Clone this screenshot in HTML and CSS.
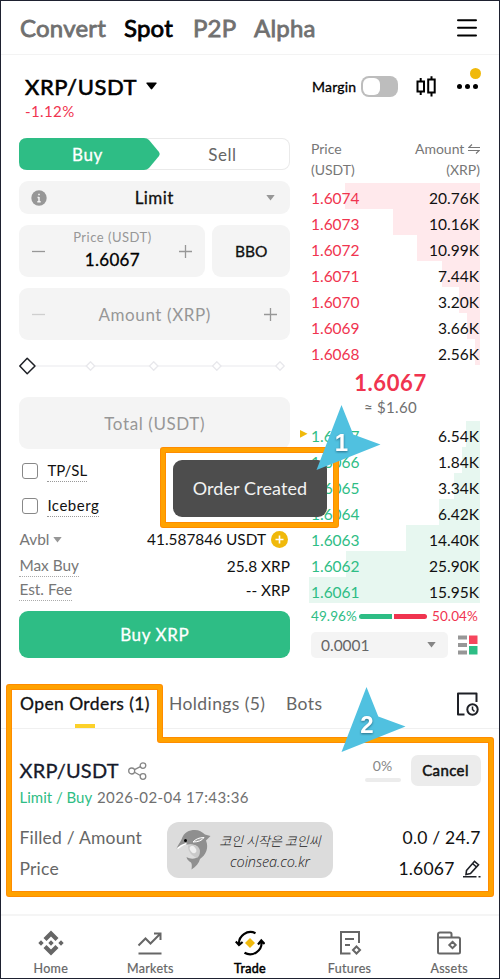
FILE: index.html
```html
<!DOCTYPE html>
<html lang="en">
<head>
    <meta charset="UTF-8">
    <meta name="viewport" content="width=device-width, initial-scale=1.0">
    <title>XRP/USDT Spot</title>
    <link rel="stylesheet" href="styles.css">
</head>
<body>
    <div class="app">
        <header class="top-nav">
            <span class="nav-link nav-convert">Convert</span>
            <span class="nav-link nav-spot active">Spot</span>
            <span class="nav-link nav-p2p">P2P</span>
            <span class="nav-link nav-alpha">Alpha</span>
            <svg class="menu-icon" width="20" height="18" viewBox="0 0 20 18" stroke="#000" stroke-width="2" stroke-linecap="round"><path d="M1 1.200h18M1 8.800h18M1 16.400h18"/></svg>
        </header>

        <div class="pair-bar">
            <div class="pair">
                <div class="pair-name"><span>XRP/USDT</span><svg width="11" height="8" viewBox="0 0 11 8"><path d="M1 .5h9q1 0 .5 1L6.200 7q-.7.8-1.400 0L.5 1.500Q0 .5 1 .5z"/></svg></div>
                <div class="pair-change">-1.12%</div>
            </div>
            <div class="pair-tools">
                <span class="margin-label">Margin</span>
                <span class="toggle"></span>
                <svg class="candle-icon" width="21" height="21" viewBox="0 0 21 21" fill="none" stroke="#000" stroke-width="2"><path d="M1.500 5.500h6.500v10H1.500zM4.700 2v3.500M4.700 15.500V19M12.200 3.500h6.500v13h-6.500zM15.500.2v3.300M15.500 16.500v4"/></svg>
                <span class="more"><i></i><i></i><i></i><b class="dot"></b></span>
            </div>
        </div>

        <main class="trade">
            <section class="form">
                <div class="side">
                    <svg class="side-bg" width="142" height="32" viewBox="0 0 142 32"><path fill="#2ebd85" d="M8 0h117q3 0 5 2l10 12q1.500 2 0 4l-10 12q-2 2-5 2H8q-8 0-8-8V8Q0 0 8 0z"/></svg>
                    <span class="side-buy">Buy</span>
                    <span class="side-sell">Sell</span>
                </div>

                <div class="field type">
                    <svg width="16" height="16" viewBox="0 0 16 16"><circle cx="8" cy="8" r="7.700" fill="#979797"/><path stroke="#f4f4f4" stroke-width="1.500" d="M8 7v5M6.500 7.500H8M6.300 11.800h3.400M7.200 4.500h1.600"/></svg>
                    <span class="type-text">Limit</span>
                    <svg width="9" height="6" viewBox="0 0 9 6"><path fill="#979797" d="M.3 0h8.400L4.500 5.600z"/></svg>
                </div>

                <div class="price-row">
                    <div class="field price">
                        <svg width="13" height="13" viewBox="0 0 13 13" stroke="#979797" stroke-width="1.300"><path d="M0 6.500h13"/></svg>
                        <div class="price-text"><small>Price (USDT)</small><strong>1.6067</strong></div>
                        <svg width="13" height="13" viewBox="0 0 13 13" stroke="#979797" stroke-width="1.300"><path d="M0 6.500h13M6.500 0v13"/></svg>
                    </div>
                    <div class="field bbo">BBO</div>
                </div>

                <div class="field amount">
                    <svg width="13" height="13" viewBox="0 0 13 13" stroke="#cfcfcf" stroke-width="1.300"><path d="M0 6.500h13"/></svg>
                    <span class="amount-text">Amount (XRP)</span>
                    <svg width="13" height="13" viewBox="0 0 13 13" stroke="#979797" stroke-width="1.300"><path d="M0 6.500h13M6.500 0v13"/></svg>
                </div>

                <svg class="slider" width="270" height="18" viewBox="0 0 270 18" fill="#fff" stroke-linejoin="round">
                    <path stroke="#f1f1f3" stroke-width="1.600" d="M17 9h244"/>
                    <path stroke="#e8e8ec" stroke-width="1.300" d="M71.500 4.800L75.700 9l-4.200 4.200L67.300 9zM134.700 4.800l4.200 4.200-4.200 4.200-4.200-4.200zM197.800 4.800L202 9l-4.200 4.200-4.200-4.200zM261 4.800l4.200 4.200-4.200 4.200-4.200-4.200z"/>
                    <path stroke="#1e2026" stroke-width="1.500" d="M8.200 1.200L16 9l-7.800 7.800L.8 9z"/>
                </svg>

                <div class="field total">Total (USDT)</div>

                <div class="check"><i></i><span class="check-tpsl">TP/SL</span></div>
                <div class="check"><i></i><span class="check-ice">Iceberg</span></div>

                <div class="info info-avbl">
                    <span class="muted">Avbl <svg width="9" height="6" viewBox="0 0 9 6"><path fill="#979797" d="M.3 0h8.400L4.500 5.600z"/></svg></span>
                    <span class="info-value"><span>41.587846 USDT</span><svg width="17" height="17" viewBox="0 0 17 17"><circle cx="8.500" cy="8.500" r="8.500" fill="#f0b90b"/><path stroke="#fff" stroke-width="1.600" d="M4.500 8.500h8M8.500 4.500v8"/></svg></span>
                </div>
                <div class="info"><span class="muted dotted">Max Buy</span><span class="xrp">25.8 XRP</span></div>
                <div class="info info-fee"><span class="muted dotted">Est. Fee</span><span class="xrp">-- XRP</span></div>

                <div class="buy-btn">Buy XRP</div>
            </section>

            <section class="book">
                <div class="book-head">
                    <div>Price<br>(USDT)</div>
                    <div class="right">Amount <svg width="12" height="10" viewBox="0 0 12 10" fill="none" stroke="#777" stroke-width="1.100"><path d="M4 .5L.8 3.500H12M8 9.500l3.200-3H0"/></svg><br>(XRP)</div>
                </div>
                <div class="asks">
                    <div class="level" style="--w:135px"><span>1.6074</span><b>20.76K</b></div>
                    <div class="level" style="--w:87px"><span>1.6073</span><b>10.16K</b></div>
                    <div class="level" style="--w:63px"><span>1.6072</span><b>10.99K</b></div>
                    <div class="level" style="--w:38px"><span>1.6071</span><b>7.44K</b></div>
                    <div class="level" style="--w:21px"><span>1.6070</span><b>3.20K</b></div>
                    <div class="level" style="--w:13px"><span>1.6069</span><b>3.66K</b></div>
                    <div class="level" style="--w:5px"><span>1.6068</span><b>2.56K</b></div>
                </div>
                <div class="last-price">1.6067</div>
                <div class="last-fiat">≈ $1.60</div>
                <div class="bids">
                    <div class="level" style="--w:14px"><span>1.6067</span><b>6.54K</b></div>
                    <div class="level" style="--w:18px"><span>1.6066</span><b>1.84K</b></div>
                    <div class="level" style="--w:26px"><span>1.6065</span><b>3.34K</b></div>
                    <div class="level" style="--w:41px"><span>1.6064</span><b>6.42K</b></div>
                    <div class="level" style="--w:74px"><span>1.6063</span><b>14.40K</b></div>
                    <div class="level" style="--w:134px"><span>1.6062</span><b>25.90K</b></div>
                    <div class="level" style="--w:171px"><span>1.6061</span><b>15.95K</b></div>
                </div>
                <div class="ratio">
                    <span class="green">49.96%</span>
                    <i class="bar-buy"></i><i class="bar-sell"></i>
                    <span class="red">50.04%</span>
                </div>
                <div class="depth">
                    <div class="depth-select"><span>0.0001</span><svg width="9" height="6" viewBox="0 0 9 6"><path fill="#858585" d="M.3 0h8.400L4.500 5.600z"/></svg></div>
                    <svg width="20" height="20" viewBox="0 0 20 20"><path fill="#979797" d="M0 .5h9v4H0zM0 8h9v4H0zM0 15.500h9v4H0z"/><path fill="#f6465d" d="M11 .5h8.500V9H11z"/><path fill="#2ebd85" d="M11 11h8.500v8.500H11z"/></svg>
                </div>
            </section>
        </main>

        <nav class="tabs">
            <span class="tab tab-orders active">Open Orders (1)</span>
            <span class="tab tab-hold">Holdings (5)</span>
            <span class="tab tab-bots">Bots</span>
            <svg class="history-icon" width="23" height="24" viewBox="0 0 23 24" fill="none" stroke="#1e2026" stroke-width="2" stroke-linejoin="round"><path d="M20.500 10V1.500H2v21h6.500"/><circle cx="16.500" cy="17.500" r="5.200"/><path stroke-width="1.500" d="M16.500 14.500v3l2 2"/></svg>
        </nav>

        <section class="order">
            <div class="order-head">
                <span class="order-pair">XRP/USDT</span>
                <svg width="19" height="18" viewBox="0 0 19 18" fill="none" stroke="#858585" stroke-width="1.300"><path d="M6.500 7.700L12.400 4.600M6.500 10.300l5.900 3.200"/><circle cx="3.700" cy="9" r="3"/><circle cx="15" cy="3.600" r="2.800"/><circle cx="15" cy="14.500" r="2.800"/></svg>
                <div class="progress"><span>0%</span><i></i></div>
                <div class="cancel">Cancel</div>
            </div>
            <div class="order-meta"><span class="green meta-side">Limit / Buy</span><span class="meta-time">2026-02-04 17:43:36</span></div>
            <div class="order-line"><span class="line-filled">Filled / Amount</span><b>0.0 / 24.7</b></div>
            <div class="order-line"><span class="line-price">Price</span><b>1.6067<svg width="18" height="18" viewBox="0 0 18 18" fill="none" stroke="#1e2026" stroke-width="1.600"><path d="M3.500 10.500L11.500 1.300l4 3.400L7.500 13.500l-4.500 1zM9.500 3.500l4 3.500M0 16.700h13.500M15.500 16.700h2"/></svg></b></div>
        </section>

        <nav class="bottom-nav">
            <div class="item">
                <svg width="26" height="26" viewBox="0 0 26 26" fill="#666"><path d="M13 .5l7.500 7.500-3 3L13 6.500 8.500 11l-3-3zM13 25.500l7.500-7.500-3-3-4.500 4.500L8.500 15l-3 3zM13 10.300l2.700 2.700-2.700 2.700-2.700-2.700zM3 10.300L5.700 13 3 15.700.3 13zM23 10.300l2.700 2.700-2.700 2.700-2.700-2.700z"/></svg>
                <span>Home</span>
            </div>
            <div class="item">
                <svg width="26" height="26" viewBox="0 0 26 26" fill="none" stroke="#666" stroke-width="2"><path d="M1.500 15.500l7-7 5 5L23 4M17 3.500h6.500V10M1.500 23.500h23"/></svg>
                <span>Markets</span>
            </div>
            <div class="item active">
                <svg width="30" height="26" viewBox="0 0 30 26" fill="none" stroke="#000" stroke-width="2.200"><path d="M20.500 3.200A11.500 11.500 0 0 0 4 14.500M.8 11.500L4 15l3.600-3M9.500 22.800A11.500 11.500 0 0 0 26.500 11.500M23 14.500l3.300-4 3.300 3.500"/><path fill="#f0b90b" stroke="none" d="M15 8l5 5-5 5-5-5z"/></svg>
                <span>Trade</span>
            </div>
            <div class="item">
                <svg width="26" height="26" viewBox="0 0 26 26" fill="none" stroke="#666" stroke-width="2"><path d="M22 13V2H4v21.500h9.500M8 9h9M8 15h5M19.500 16.500L23 20l-3.500 3.500L16 20z"/></svg>
                <span>Futures</span>
            </div>
            <div class="item">
                <svg width="26" height="26" viewBox="0 0 26 26" fill="none" stroke="#666" stroke-width="2"><path d="M2 7.500V4.500q0-2 2-2h10q1.500 0 1.500 1.500v3.500M2 7.500h20.500q1.500 0 1.500 1.500v13q0 1.500-1.500 1.500h-19Q2 23.500 2 22zM16.500 11.800l3.200 3.200-3.200 3.200-3.200-3.200z"/></svg>
                <span>Assets</span>
            </div>
        </nav>

        <div class="watermark">
            <svg width="42" height="46" viewBox="0 0 42 46">
                <path fill="#8f8f8f" d="M4.500 22.500C6 19 8 16.500 9.500 13.500 12 6 17 4 23 4c4 0 7 2 10 4.500l5.500 1.500-4.500 4.500C37 22 34 29 28 33c-1 4-4 8-8.500 10.500.5-3.500.5-5.500-.5-7-2-1.500-4-2.500-4.500-5.500 3.500 2 6.500 2 9.500 1 3-4 4-7 2-11-4-4-12-3.500-21.500 1.500z"/>
                <path fill="#c9c9c9" d="M16 19.500c5-1.500 11 0 12 5 0 4-1 6-3 7.500-5-2-9-6-9-12.500z"/>
                <ellipse cx="21" cy="23.500" rx="2.800" ry="4" fill="#efefef" transform="rotate(-35 21 23.500)"/>
                <path fill="none" stroke="#fff" stroke-width="1.600" d="M5.500 22.500q4-3.500 9-5"/>
                <path fill="#a3a3a3" stroke="#fff" d="M21 16q4-4.500 11-4.500-3 4.500-11 4.500z"/>
                <circle cx="13.500" cy="14.500" r="1.500"/>
            </svg>
            <div class="watermark-text"><span class="wm-ko">코인 시작은 코인씨</span><span class="wm-url">coinsea.co.kr</span></div>
        </div>

        <div class="toast">Order Created</div>

        <svg class="callouts" width="500" height="979" viewBox="0 0 500 979">
            <g fill="none" stroke-linejoin="round">
                <path stroke="#ff8c00" stroke-width="6" d="M163 450h173v75H163zM9 687h151v53h331v154H9z"/>
                <path stroke="#ffa200" stroke-width="4" d="M163 450h173v75H163zM9 687h151v53h331v154H9z"/>
            </g>
            <path fill="#f0b90b" d="M300 430l7.500 3.800-7.500 4z"/>
            <path fill="#50c1e0" d="M341.500 405L353.300 434.500 380.500 444.500 316.500 470zM366.500 687L378.300 716.500 405.500 726.500 341.500 752z"/>
            <g class="callout-num">
                <text x="341.500" y="451">1</text>
                <text x="367" y="733">2</text>
            </g>
        </svg>
    </div>
</body>
</html>
```
FILE: styles.css
```css
* {
    box-sizing: border-box;
}

body {
    margin: 0;
    font-family: Lato, "Open Sans", sans-serif;
    font-size: 16px;
    color: #111;
    background: #fff;
}

svg {
    display: block;
    flex: none;
}

.app {
    position: relative;
    width: 500px;
    height: 979px;
    border: 1px solid #1e2130;
    background: #fff;
    overflow: hidden;
    white-space: nowrap;
}

.green { color: #2ebd85; }
.red { color: #f0344f; }

/* Medium weight: regular face with a thin outline */
.nav-link,
.pair-name,
.margin-label,
.side-buy,
.type-text,
.price-text strong,
.bbo,
.buy-btn,
.tab-orders,
.order-pair,
.cancel,
.item {
    font-weight: 400;
    -webkit-text-stroke: .3px currentColor;
}

/* Top navigation */
.top-nav {
    display: flex;
    align-items: center;
    height: 54px;
    padding: 0 22px 0 19px;
    border-bottom: 1px solid #f3f3f3;
}

.nav-link {
    font-size: 24px;
    letter-spacing: .2px;
    -webkit-text-stroke-width: .8px;
    color: #707070;
}

.nav-link.active { color: #000; }
.nav-convert { width: 104px; }
.nav-spot { width: 69px; }
.nav-p2p { width: 61px; }
.menu-icon { margin-left: auto; }

/* Pair title and tools */
.pair-bar {
    display: flex;
    justify-content: space-between;
    height: 83px;
    padding: 17px 20px 0 24px;
}

.pair-name {
    display: flex;
    align-items: center;
    gap: 9px;
    height: 28px;
    font-size: 22px;
    letter-spacing: .6px;
    -webkit-text-stroke-width: .6px;
    color: #000;
}

.pair-change {
    line-height: 23px;
    font-size: 15px;
    letter-spacing: .4px;
    color: #f0344f;
}

.pair-tools {
    display: flex;
    align-items: center;
    height: 29px;
}

.margin-label {
    width: 49px;
    font-size: 14px;
    letter-spacing: .2px;
    color: #000;
}

.toggle {
    width: 37px;
    height: 21px;
    padding: 2px;
    border-radius: 8px;
    background: #bdbdbd;
}

.toggle::after {
    content: "";
    display: block;
    width: 17px;
    height: 17px;
    border-radius: 6px;
    background: #fff;
}

.candle-icon { margin-left: 18px; }

.more {
    position: relative;
    display: flex;
    gap: 3px;
    margin: 0 1px 0 20px;
}

.more i {
    width: 5px;
    height: 5px;
    border-radius: 50%;
    background: #000;
}

.more .dot {
    position: absolute;
    top: -16px;
    left: 13px;
    width: 11px;
    height: 11px;
    border-radius: 50%;
    background: #f0b90b;
}

/* Main trade area */
.trade {
    display: flex;
    height: 530px;
    padding-left: 18.4px;
}

.form {
    width: 270.6px;
    margin-right: 19px;
}

.side {
    position: relative;
    display: flex;
    height: 32px;
    border-radius: 8px;
    box-shadow: inset 0 0 0 1px #eaeaea;
    line-height: 33px;
    text-align: center;
    font-size: 17px;
}

.side-bg {
    position: absolute;
    left: 0;
    top: 0;
}

.side-buy {
    position: relative;
    width: 136px;
    letter-spacing: .5px;
    color: #fff;
}

.side-sell {
    width: 134px;
    letter-spacing: .5px;
    color: #666;
}

.field {
    display: flex;
    align-items: center;
    justify-content: space-between;
    height: 52px;
    border-radius: 9px;
    background: #f4f4f4;
    padding: 0 13px;
}

.type {
    height: 33px;
    margin-top: 11px;
    padding: 0 15px 0 12px;
}

.type-text {
    font-size: 17px;
    letter-spacing: .4px;
    margin-right: 5px;
    color: #111;
}

.price-row {
    display: flex;
    gap: 7px;
    margin-top: 11px;
}

.price { width: 186px; }

.price-text {
    display: flex;
    flex-direction: column;
    align-items: center;
}

.price-text small {
    font-size: 13px;
    line-height: 18px;
    letter-spacing: .5px;
    color: #979797;
}

.price-text strong {
    font-size: 17px;
    line-height: 28px;
    letter-spacing: .3px;
    color: #000;
}

.bbo {
    width: 77.6px;
    justify-content: center;
    padding-bottom: 1px;
    font-size: 15.5px;
}

.amount,
.total {
    font-size: 17px;
    letter-spacing: .6px;
    color: #979797;
}

.amount { margin-top: 11px; }

.slider { margin-top: 17px; }

.total {
    justify-content: center;
    margin: 22px 0 5px;
}

.check {
    display: flex;
    align-items: center;
    height: 34.5px;
    font-size: 15px;
}

.check i {
    width: 16px;
    height: 16px;
    margin: 0 9px 0 3px;
    border: 1px solid #888;
    border-radius: 3px;
}

.check span {
    line-height: 21px;
    border-bottom: 1px dotted #999;
}

.check-ice { letter-spacing: .5px; }

.info {
    display: flex;
    align-items: center;
    justify-content: space-between;
    height: 24px;
    font-size: 15.4px;
}

.info-avbl {
    height: 30px;
    margin-top: 1px;
}

.info-fee { height: 23px; }
.info .muted { color: #777; }

.info .muted svg {
    display: inline-block;
    vertical-align: 2px;
}

.info-value {
    display: flex;
    align-items: center;
    gap: 5px;
    padding-right: 2px;
}

.dotted {
    line-height: 21px;
    border-bottom: 1px dotted #aaa;
}

.buy-btn {
    height: 47px;
    margin-top: 10px;
    border-radius: 9px;
    background: #2ebd85;
    color: #fff;
    font-size: 17px;
    letter-spacing: .6px;
    line-height: 48px;
    text-align: center;
}

/* Order book */
.book { width: 171px; }

.book-head {
    display: flex;
    justify-content: space-between;
    height: 45px;
    padding: 0 0 0 2px;
    font-size: 14px;
    line-height: 21px;
    color: #777;
}

.book-head svg {
    display: inline-block;
}

.right { text-align: right; }

.level {
    display: flex;
    align-items: center;
    justify-content: space-between;
    height: 26px;
    padding: 3px 1px 0 2px;
    font-size: 15.5px;
    background: linear-gradient(var(--depth), var(--depth)) no-repeat right / var(--w) 100%;
}

.level b {
    font-weight: 400;
    color: #111;
}

.asks { --depth: #ffe9ec; color: #f0344f; height: 182px; }
.bids { --depth: #e7f7f0; color: #2ebd85; height: 182px; }

.last-price {
    height: 34px;
    padding-right: 8px;
    line-height: 36px;
    font-size: 22px;
    letter-spacing: .6px;
    font-weight: 700;
    text-align: center;
    color: #f0344f;
}

.last-fiat {
    height: 22px;
    padding-right: 8px;
    line-height: 17px;
    font-size: 15px;
    letter-spacing: .3px;
    text-align: center;
    color: #707070;
}

.ratio {
    display: flex;
    align-items: center;
    height: 26px;
    padding-left: 2px;
    font-size: 13.5px;
    letter-spacing: .1px;
}

.ratio span { width: 51px; }
.ratio .red { margin-left: 5px; }

.bar-buy,
.bar-sell {
    flex: none;
    width: 33px;
    height: 5px;
    border-radius: 3px 0 0 3px;
    background: #2ebd85;
}

.bar-sell {
    margin-left: 2px;
    border-radius: 0 3px 3px 0;
    background: #f0344f;
}

.depth {
    display: flex;
    align-items: center;
    justify-content: space-between;
    margin-top: 3px;
    padding: 0 2px;
}

.depth-select {
    display: flex;
    align-items: center;
    justify-content: space-between;
    width: 137px;
    height: 26px;
    padding: 0 12px 0 10px;
    border-radius: 5px;
    background: #f4f4f4;
    font-size: 15.5px;
    line-height: 24px;
    color: #666;
}

/* Orders tabs */
.tabs {
    display: flex;
    align-items: center;
    height: 61px;
    padding: 11px 20px 0 19px;
    border-bottom: 1px solid #f0f0f0;
    font-size: 17.5px;
    letter-spacing: .4px;
    color: #666;
}

.tab-orders {
    position: relative;
    width: 149px;
    color: #111;
}

.tab-orders::after {
    content: "";
    position: absolute;
    left: 55px;
    top: 31px;
    width: 20px;
    height: 4px;
    background: #fcd12a;
}

.tab-hold { width: 117px; }
.history-icon { margin-left: auto; }

/* Open order */
.order {
    height: 185px;
    padding: 26px 18.5px 0 18.5px;
}

.order-head {
    display: flex;
    align-items: center;
    height: 31px;
}

.order-pair {
    width: 108px;
    font-size: 20px;
    letter-spacing: .2px;
    line-height: 29px;
    color: #161a2b;
}

.progress {
    display: flex;
    flex-direction: column;
    align-items: center;
    gap: 4px;
    width: 36px;
    margin: -3px 0 0 auto;
    font-size: 14px;
    color: #888;
}

.progress i {
    width: 36px;
    height: 4px;
    border-radius: 2px;
    background: #ececec;
}

.cancel {
    width: 70px;
    height: 31px;
    margin-left: 10px;
    border-radius: 7px;
    background: #ececec;
    font-size: 15px;
    letter-spacing: .4px;
    line-height: 31px;
    text-align: center;
    -webkit-text-stroke-width: .5px;
}

.order-meta {
    height: 39px;
    line-height: 23px;
    font-size: 15px;
    color: #707070;
}

.meta-side {
    display: inline-block;
    width: 77.5px;
}

.meta-time { letter-spacing: .4px; }

.order-line {
    display: flex;
    justify-content: space-between;
    height: 31px;
    line-height: 26px;
    font-size: 17.5px;
    letter-spacing: .2px;
    color: #666;
}

.order-line b {
    display: flex;
    align-items: center;
    gap: 8px;
    height: 26px;
    font-weight: 400;
    color: #111;
}

/* Bottom navigation */
.bottom-nav {
    display: flex;
    height: 65px;
    border-top: 2px solid #f5f5f5;
}

.item {
    display: flex;
    flex: 1;
    flex-direction: column;
    align-items: center;
    padding-top: 14px;
    font-size: 12.5px;
    letter-spacing: .3px;
    line-height: 25px;
    -webkit-text-stroke-width: .2px;
    color: #666;
}

.item.active {
    color: #000;
    -webkit-text-stroke-width: .5px;
}

/* Overlays */
.watermark {
    position: absolute;
    left: 166px;
    top: 821px;
    display: flex;
    width: 166px;
    height: 56px;
    padding: 4px 0 0 5px;
    border-radius: 12px;
    background: #dcdcdc;
}

.watermark-text {
    display: flex;
    flex-direction: column;
    align-items: center;
    width: 112px;
    padding-top: 4px;
    font-style: italic;
    line-height: 21px;
    color: #222;
}

.wm-ko {
    font-family: "Noto Sans CJK KR", sans-serif;
    font-size: 13px;
    font-weight: 300;
}

.wm-url {
    font-family: "Open Sans", sans-serif;
    font-size: 14.5px;
    font-weight: 300;
    letter-spacing: -.1px;
}

.toast {
    position: absolute;
    left: 172px;
    top: 459px;
    width: 154px;
    height: 57px;
    border-radius: 9px;
    background: #4d4d4d;
    color: #f2f2f2;
    font-size: 18px;
    letter-spacing: .1px;
    line-height: 57px;
    text-align: center;
}

.callouts {
    position: absolute;
    left: -1px;
    top: -1px;
}

.callout-num {
    font-family: "Liberation Sans", sans-serif;
    font-size: 24px;
    font-weight: 700;
    fill: #fff;
    text-anchor: middle;
    filter: drop-shadow(0 1px 1px #2a6f88);
}
```
